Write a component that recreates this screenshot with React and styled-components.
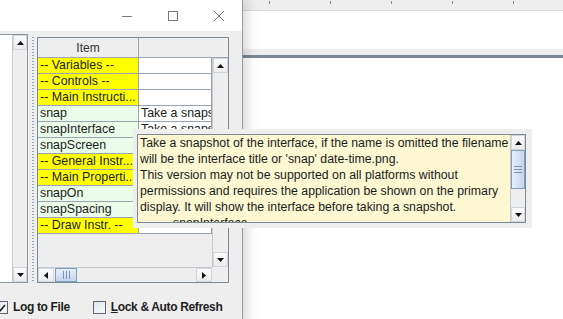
import React from "react"
import styled, { createGlobalStyle } from "styled-components"

const GlobalStyle = createGlobalStyle`
  html, body {
    margin: 0;
    padding: 0;
    background: #fff;
  }
  body {
    font-family: "Liberation Sans", Arial, sans-serif;
  }
`

const Desktop = styled.div`
  position: relative;
  width: 563px;
  height: 319px;
  overflow: hidden;
  background: #fff;
`

/* the editor that sits behind the window */
const Backdrop = styled.div`
  display: flex;
  flex-direction: column;
  height: 100%;
`

const Ruler = styled.div`
  height: 10px;
  background-color: #eeeeee;
  background-image: linear-gradient(to right, #8c8c8c 0 1px, transparent 1px);
  background-size: 61px 3px;
  background-position: 25px 1px;
  background-repeat: repeat-x;
  border-bottom: 1px solid #d9d9d9;
`

const Sheet = styled.div`
  height: 38px;
  background: #fff;
`

const Band = styled.div`
  height: 6px;
  background: #eeeeee;
  border-bottom: 3px solid #7b8795;
`

const Canvas = styled.div`
  flex: 1;
  background: #fff;
`

/* the window */
const Window = styled.div`
  position: absolute;
  left: -40px;
  top: 0;
  width: 283px;
  height: 330px;
  box-sizing: border-box;
  border-right: 1px solid #9b9b9b;
  background: #eeeeee;
  box-shadow: 3px 0 12px rgba(0, 0, 0, 0.18);
  display: flex;
  flex-direction: column;
`

const TitleBar = styled.div`
  height: 31px;
  flex-shrink: 0;
  background: #fff;
  display: flex;
  justify-content: flex-end;
`

const TitleButton = styled.div`
  width: 46px;
  height: 31px;
  display: flex;
  align-items: center;
  justify-content: center;
  padding-top: 1px;
  box-sizing: border-box;
`

const WindowBody = styled.div`
  flex: 1;
  display: flex;
  flex-direction: column;
  padding-top: 3px;
`

const SplitRow = styled.div`
  display: flex;
  height: 249px;
`

const LeftPane = styled.div`
  width: 68px;
  box-sizing: border-box;
  border: 1px solid #8a97a4;
  display: flex;
`

const ListArea = styled.div`
  flex: 1;
  background: #fff;
`

const Divider = styled.div`
  width: 9px;
  display: flex;
  justify-content: center;
  padding: 3px 0 0;

  &::before {
    content: "";
    width: 2px;
    background-image: repeating-linear-gradient(
      to bottom,
      #9aa4ae 0 1px,
      transparent 1px 3px
    );
  }
`

const TablePane = styled.div`
  width: 192px;
  height: 246px;
  margin-top: 3px;
  box-sizing: border-box;
  border: 1px solid #7a8a99;
  display: flex;
  flex-direction: column;
`

const HeaderRow = styled.div`
  height: 20px;
  flex-shrink: 0;
  box-sizing: border-box;
  border-bottom: 1px solid #9aa5b1;
  display: flex;
  background: #eeeeee;
`

const HeaderCell = styled.div`
  width: ${(p) => (p.$w ? `${p.$w}px` : "auto")};
  flex: ${(p) => (p.$w ? "none" : 1)};
  box-sizing: border-box;
  border-right: ${(p) => (p.$w ? "1px solid #9aa5b1" : "none")};
  font-size: 12px;
  color: #333;
  display: flex;
  align-items: center;
  justify-content: center;
  padding-top: 1px;
`

const TableBody = styled.div`
  flex: 1;
  display: flex;
  min-height: 0;
`

const Viewport = styled.div`
  flex: 1;
  background: #eeeeee;
  overflow: hidden;
`

const Grid = styled.div`
  display: grid;
  grid-template-columns: 101px 73px;
  grid-auto-rows: 16px;
`

const Cell = styled.div`
  box-sizing: border-box;
  border-right: 1px solid #9aa5b1;
  border-bottom: 1px solid #9aa5b1;
  background: ${(p) =>
    p.$kind === "section" ? "#ffff00" : p.$kind === "item" ? "#e9fde9" : "#fff"};
  font-size: 12.4px;
  line-height: 15px;
  color: #222;
  padding-left: 2px;
  white-space: nowrap;
  overflow: hidden;
`

const VScroll = styled.div`
  width: ${(p) => p.$w || 16}px;
  flex-shrink: 0;
  box-sizing: border-box;
  border-left: 1px solid #c3c9d0;
  background: #eeeeee;
  display: flex;
  flex-direction: column;
`

const ScrollButton = styled.div`
  height: 15px;
  flex-shrink: 0;
  box-sizing: border-box;
  background: linear-gradient(#fbfbfb, #ececec);
  border: 1px solid #d2d6db;
  display: flex;
  align-items: center;
  justify-content: center;
`

const Track = styled.div`
  flex: 1;
  background: #eeeeee;
  display: flex;
  flex-direction: ${(p) => (p.$horizontal ? "row" : "column")};
`

const Thumb = styled.div`
  box-sizing: border-box;
  border: 1px solid #7f9db9;
  background: ${(p) =>
    p.$horizontal
      ? "linear-gradient(#e6eefa, #c4d5ee)"
      : "linear-gradient(to right, #e6eefa, #c4d5ee)"};
  display: flex;
  align-items: center;
  justify-content: center;
`

const Grip = styled.div`
  width: ${(p) => (p.$horizontal ? "7px" : "8px")};
  height: ${(p) => (p.$horizontal ? "8px" : "7px")};
  background-image: ${(p) =>
    p.$horizontal
      ? "repeating-linear-gradient(to right, #7f93b0 0 1px, transparent 1px 3px)"
      : "repeating-linear-gradient(to bottom, #7f93b0 0 1px, transparent 1px 3px)"};
`

const HScrollRow = styled.div`
  height: 15px;
  flex-shrink: 0;
  display: flex;
`

const HScroll = styled.div`
  flex: 1;
  display: flex;
  box-sizing: border-box;
  border-top: 1px solid #c3c9d0;
`

const HButton = styled(ScrollButton)`
  width: 16px;
  height: 100%;
`

const Corner = styled.div`
  width: 16px;
  background: #eeeeee;
`

const CheckRow = styled.div`
  display: flex;
  align-items: center;
  gap: 23px;
  height: 13px;
  margin-top: 18px;
  padding-left: 35px;
`

const CheckLabel = styled.label`
  display: flex;
  align-items: center;
  gap: 5px;
  font-size: 12px;
  font-weight: bold;
  letter-spacing: -0.35px;
  color: #222;
  line-height: 13px;
  white-space: nowrap;
`

const Box = styled.span`
  width: 13px;
  height: 13px;
  flex-shrink: 0;
  box-sizing: border-box;
  border: 1px solid #5c6670;
  background: linear-gradient(135deg, #dfe6ee, #fafbfc);
  display: flex;
  align-items: center;
  justify-content: center;
`

/* tooltip */
const Tooltip = styled.div`
  position: absolute;
  left: 133px;
  top: 129px;
  width: 399px;
  height: 99px;
  box-sizing: border-box;
  padding: 5px 6px 5px 4px;
  background: #eeeeee;
`

const TipPane = styled.div`
  height: 100%;
  box-sizing: border-box;
  border: 1px solid #7a8a99;
  background: #fdf7d2;
  display: flex;
`

const TipText = styled.div`
  flex: 1;
  overflow: hidden;
  padding-left: 2px;
  font-size: 12.3px;
  line-height: 16px;
  color: #1c1c1c;
  white-space: nowrap;
`

const TipLine = styled.div`
  padding-left: ${(p) => p.$indent || 0}px;
`

const Arrow = ({ dir }) => {
  const pts = {
    up: "0,4 7,4 3.5,0",
    down: "0,0 7,0 3.5,4",
    left: "4,0 4,7 0,3.5",
    right: "0,0 0,7 4,3.5",
  }[dir]
  const vertical = dir === "up" || dir === "down"
  return (
    <svg width={vertical ? 7 : 4} height={vertical ? 4 : 7} viewBox={vertical ? "0 0 7 4" : "0 0 4 7"}>
      <polygon points={pts} fill="#111" />
    </svg>
  )
}

const rows = [
  { name: "-- Variables --", kind: "section" },
  { name: "-- Controls --", kind: "section" },
  { name: "-- Main Instructi...", kind: "section" },
  { name: "snap", kind: "item", desc: "Take a snapshot of the interface" },
  { name: "snapInterface", kind: "item", desc: "Take a snapshot of the interface" },
  { name: "snapScreen", kind: "item", desc: "Take a snapshot of the screen" },
  { name: "-- General Instr...", kind: "section" },
  { name: "-- Main Properti...", kind: "section" },
  { name: "snapOn", kind: "item", desc: "Snap to grid" },
  { name: "snapSpacing", kind: "item", desc: "Grid spacing" },
  { name: "-- Draw Instr. --", kind: "section" },
]

const tipLines = [
  "Take a snapshot of the interface, if the name is omitted the filename",
  "will be the interface title or 'snap' date-time.png.",
  "This version may not be supported on all platforms without",
  "permissions and requires the application be shown on the primary",
  "display. It will show the interface before taking a snapshot.",
]

export default function App() {
  return (
    <>
      <GlobalStyle />
      <Desktop>
        <Backdrop>
          <Ruler />
          <Sheet />
          <Band />
          <Canvas />
        </Backdrop>

        <Window>
          <TitleBar>
            <TitleButton>
              <svg width="10" height="10" viewBox="0 0 10 10">
                <line x1="0" y1="5.5" x2="10" y2="5.5" stroke="#7a7a7a" />
              </svg>
            </TitleButton>
            <TitleButton>
              <svg width="10" height="10" viewBox="0 0 10 10">
                <rect x="0.5" y="0.5" width="9" height="9" fill="none" stroke="#7a7a7a" />
              </svg>
            </TitleButton>
            <TitleButton>
              <svg width="10" height="10" viewBox="0 0 10 10">
                <path d="M0 0 L10 10 M10 0 L0 10" stroke="#7a7a7a" strokeWidth="1" />
              </svg>
            </TitleButton>
          </TitleBar>

          <WindowBody>
            <SplitRow>
              <LeftPane>
                <ListArea />
                <VScroll $w={15}>
                  <ScrollButton>
                    <Arrow dir="up" />
                  </ScrollButton>
                  <Track />
                  <ScrollButton>
                    <Arrow dir="down" />
                  </ScrollButton>
                </VScroll>
              </LeftPane>

              <Divider />

              <TablePane>
                <HeaderRow>
                  <HeaderCell $w={101}>Item</HeaderCell>
                  <HeaderCell />
                </HeaderRow>
                <TableBody>
                  <Viewport>
                    <Grid>
                      {rows.map((r) => (
                        <React.Fragment key={r.name}>
                          <Cell $kind={r.kind}>{r.name}</Cell>
                          <Cell>{r.desc || ""}</Cell>
                        </React.Fragment>
                      ))}
                    </Grid>
                  </Viewport>
                  <VScroll>
                    <ScrollButton>
                      <Arrow dir="up" />
                    </ScrollButton>
                    <Track />
                    <ScrollButton>
                      <Arrow dir="down" />
                    </ScrollButton>
                  </VScroll>
                </TableBody>
                <HScrollRow>
                  <HScroll>
                    <HButton>
                      <Arrow dir="left" />
                    </HButton>
                    <Track $horizontal>
                      <Thumb $horizontal style={{ width: 22, marginLeft: 1 }}>
                        <Grip $horizontal />
                      </Thumb>
                    </Track>
                    <HButton>
                      <Arrow dir="right" />
                    </HButton>
                  </HScroll>
                  <Corner />
                </HScrollRow>
              </TablePane>
            </SplitRow>

            <CheckRow>
              <CheckLabel>
                <Box>
                  <svg width="9" height="8" viewBox="0 0 9 8">
                    <path d="M1 4 L3.5 6.5 L8 1" fill="none" stroke="#222" strokeWidth="1.6" />
                  </svg>
                </Box>
                Log to File
              </CheckLabel>
              <CheckLabel>
                <Box />
                <span>
                  <u>L</u>ock &amp; Auto Refresh
                </span>
              </CheckLabel>
            </CheckRow>
          </WindowBody>
        </Window>

        <Tooltip>
          <TipPane>
            <TipText>
              {tipLines.map((l) => (
                <TipLine key={l}>{l}</TipLine>
              ))}
              <TipLine $indent={33}>snapInterface</TipLine>
            </TipText>
            <VScroll $w={15}>
              <ScrollButton>
                <Arrow dir="up" />
              </ScrollButton>
              <Thumb style={{ height: 39 }}>
                <Grip />
              </Thumb>
              <Track />
              <ScrollButton>
                <Arrow dir="down" />
              </ScrollButton>
            </VScroll>
          </TipPane>
        </Tooltip>
      </Desktop>
    </>
  )
}
